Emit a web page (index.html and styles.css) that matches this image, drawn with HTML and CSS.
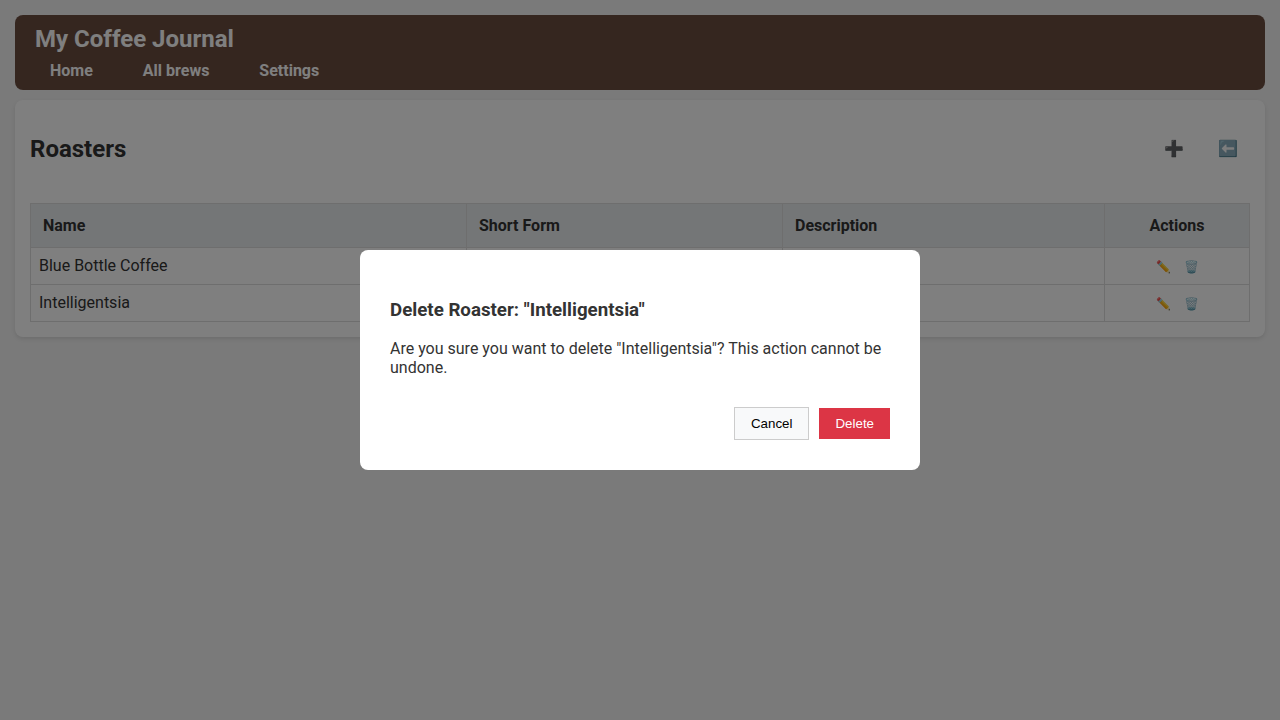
FILE: index.html
```html
<!DOCTYPE html>
<html lang="en">
<head>
<meta charset="utf-8">
<title>My Coffee Journal</title>
<link rel="stylesheet" href="styles.css">
</head>
<body>
<header class="header">
  <h1 class="brand">My Coffee Journal</h1>
  <nav class="nav">
    <a class="nav-link" href="#">Home</a>
    <a class="nav-link" href="#">All brews</a>
    <a class="nav-link" href="#">Settings</a>
  </nav>
</header>
<main class="card">
  <div class="card-head">
    <h2 class="title">Roasters</h2>
    <div class="head-actions">
      <button class="icon-button" type="button" aria-label="Add roaster">➕</button>
      <button class="icon-button" type="button" aria-label="Back">⬅️</button>
    </div>
  </div>
  <table class="table">
    <colgroup><col class="col-name"><col class="col-short"><col class="col-desc"><col class="col-actions"></colgroup>
    <thead>
      <tr><th>Name</th><th>Short Form</th><th>Description</th><th class="actions">Actions</th></tr>
    </thead>
    <tbody>
      <tr><td>Blue Bottle Coffee</td><td></td><td></td><td class="actions"><div class="row-actions"><button class="row-button" type="button" aria-label="Edit">✏️</button><button class="row-button" type="button" aria-label="Delete">🗑️</button></div></td></tr>
      <tr><td>Intelligentsia</td><td></td><td></td><td class="actions"><div class="row-actions"><button class="row-button" type="button" aria-label="Edit">✏️</button><button class="row-button" type="button" aria-label="Delete">🗑️</button></div></td></tr>
    </tbody>
  </table>
</main>
<div class="overlay">
  <div class="modal" role="dialog" aria-modal="true" aria-labelledby="modal-title">
    <h3 class="modal-title" id="modal-title">Delete Roaster: "Intelligentsia"</h3>
    <p class="modal-text">Are you sure you want to delete "Intelligentsia"? This action cannot be undone.</p>
    <div class="modal-actions">
      <button class="button cancel" type="button">Cancel</button>
      <button class="button delete" type="button">Delete</button>
    </div>
  </div>
</div>
</body>
</html>
```
FILE: styles.css
```css
* { box-sizing: border-box; }
body {
  margin: 0;
  padding: 15px;
  background: #f4f4f4;
  color: #333;
  font-family: Roboto, sans-serif;
  font-size: 16px;
}
.header {
  margin-bottom: 10px;
  padding: 10px 20px;
  border-radius: 8px;
  background: #6b4c3f;
  color: #fff;
}
.brand { margin: 0; font-size: 24px; line-height: 28px; }
.nav { display: flex; gap: 20px; padding-top: 8px; }
.nav-link {
  padding: 0 15px;
  color: #fff;
  font-weight: bold;
  line-height: 19px;
  text-decoration: none;
}
.card {
  padding: 15px;
  border-radius: 8px;
  background: #fff;
  box-shadow: 0 2px 4px rgba(0, 0, 0, 0.1);
}
.card-head {
  display: flex;
  justify-content: space-between;
  align-items: center;
  margin-bottom: 20px;
}
.title { margin: 20px 0; font-size: 24px; line-height: 28px; }
.head-actions { display: flex; gap: 10px; }
.icon-button {
  width: 44px;
  padding: 8px 0;
  border: 0;
  background: none;
  color: #333;
  font: 16px/22px Roboto, sans-serif;
}
.table { width: 100%; border-collapse: collapse; table-layout: fixed; }
.col-name { width: 436px; }
.col-short { width: 316px; }
.col-desc { width: 322px; }
.col-actions { width: 145px; }
.table th {
  padding: 12px;
  border: 1px solid #ddd;
  background: #e9ecef;
  text-align: left;
  line-height: 19px;
}
.table td { height: 37px; padding: 8px; border: 1px solid #ddd; line-height: 19px; vertical-align: top; }
.table .actions { text-align: center; }
.row-actions { display: flex; justify-content: center; gap: 10px; }
.row-button {
  width: 18px;
  padding: 3px 0 0;
  border: 0;
  background: none;
  font: 12px/17px Roboto, sans-serif;
}
.overlay {
  position: fixed;
  inset: 0;
  display: flex;
  align-items: center;
  justify-content: center;
  background: rgba(0, 0, 0, 0.5);
}
.modal {
  width: 90%;
  max-width: 560px;
  padding: 30px;
  border-radius: 8px;
  background: #fff;
}
.modal-title { margin: 19px 0 18px; line-height: 22px; }
.modal-text { margin: 0; line-height: 19px; }
.modal-actions { display: flex; align-items: center; justify-content: flex-end; gap: 10px; margin-top: 30px; }
.button {
  padding: 8px 16px;
  border: 0;
  font-family: "Liberation Sans", Arial, sans-serif;
  line-height: 15px;
}
.cancel { border: 1px solid #ccc; background: #f8f9fa; color: #000; }
.delete { background: #dc3545; color: #fff; }
```
